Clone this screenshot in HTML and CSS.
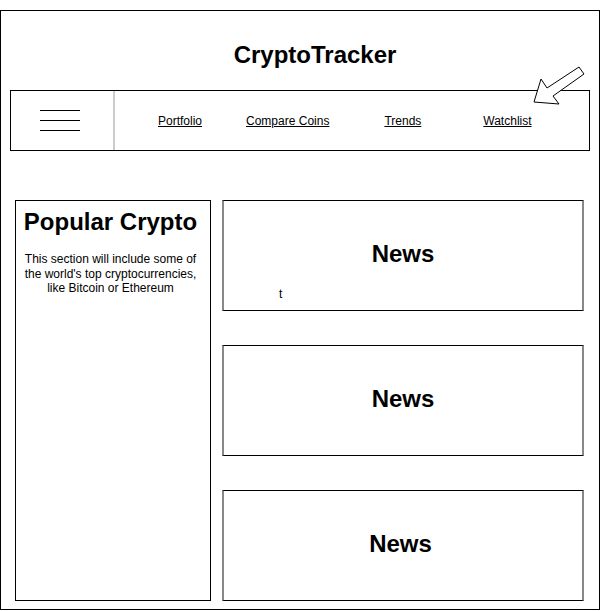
FILE: index.html
```html
<!DOCTYPE html>
<html>
<head>
<meta charset="utf-8">
<link rel="stylesheet" href="styles.css">
</head>
<body>
<div class="frame">
  <h1 class="title">CryptoTracker</h1>
  <svg class="arrow" width="58" height="44" viewBox="0 0 58 44">
    <polygon points="3,38 10,15 16,24 48,3 53,10 22,32 28,40" fill="#fff" stroke="#000" stroke-width="1"/>
  </svg>
  <nav class="nav">
    <div class="burger"><span></span><span></span><span></span></div>
    <div class="links">
      <a href="#" class="link">Portfolio</a>
      <a href="#" class="link l2">Compare Coins</a>
      <a href="#" class="link l3">Trends</a>
      <a href="#" class="link l4">Watchlist</a>
    </div>
  </nav>
  <div class="main">
    <section class="popular">
      <h2 class="pop-title">Popular Crypto</h2>
      <p class="pop-text">This section will include some of<br>the world's top cryptocurrencies,<br>like Bitcoin or Ethereum</p>
    </section>
    <div class="news-col">
      <div class="news"><h2 class="news-title">News</h2><span class="stray">t</span></div>
      <div class="news"><h2 class="news-title">News</h2></div>
      <div class="news"><h2 class="news-title shift">News</h2></div>
    </div>
  </div>
</div>
</body>
</html>
```
FILE: styles.css
```css
* { box-sizing: border-box; }
body {
  margin: 0;
  font-family: "Liberation Sans", Arial, sans-serif;
  color: #000;
  background: #fff;
}
.frame {
  margin-top: 10px;
  width: 600px;
  height: 600px;
  border: 1px solid #000;
  position: relative;
}
.title {
  margin: 0;
  padding: 30px 0 0 30px;
  height: 79px;
  font-size: 24px;
  line-height: 28px;
  font-weight: bold;
  text-align: center;
}
.arrow {
  position: absolute;
  left: 530px;
  top: 53px;
}
.nav {
  margin: 0 9px;
  height: 61px;
  border: 1px solid #000;
  display: flex;
  align-items: stretch;
}
.burger {
  width: 104px;
  border-right: 2px solid #ccc;
  padding-left: 29px;
  display: flex;
  flex-direction: column;
  justify-content: center;
  gap: 9px;
}
.burger span {
  display: block;
  width: 40px;
  height: 1px;
  background: #000;
}
.links {
  display: flex;
  align-items: center;
  padding-left: 43px;
}
.link {
  color: #000;
  font-size: 12px;
  text-decoration: underline;
}
.l2 { margin-left: 44px; }
.l3 { margin-left: 55px; }
.l4 { margin-left: 62px; }
.main {
  margin-top: 49px;
  padding-left: 14px;
  display: flex;
  gap: 11px;
}
.popular {
  width: 196px;
  height: 401px;
  border: 1px solid #000;
  padding: 7px 5px 0 0;
  text-align: center;
}
.pop-title {
  margin: 0;
  font-size: 24px;
  line-height: 28px;
  font-weight: bold;
}
.pop-text {
  margin: 16px 0 0;
  font-size: 12px;
  line-height: 14.5px;
}
.news-col {
  display: flex;
  flex-direction: column;
  gap: 34px;
}
.news {
  position: relative;
  width: 362px;
  height: 111px;
  border-top: 1px solid #000;
  border-bottom: 1px solid #000;
  border-left: 2px solid #888;
  border-right: 2px solid #888;
  display: flex;
  align-items: center;
  justify-content: center;
  padding-bottom: 4px;
}
.news-title {
  margin: 0;
  font-size: 24px;
  line-height: 28px;
  font-weight: bold;
}
.shift { margin-left: -5px; }
.stray {
  position: absolute;
  left: 55px;
  top: 86px;
  font-size: 12px;
  line-height: 14px;
}
```
